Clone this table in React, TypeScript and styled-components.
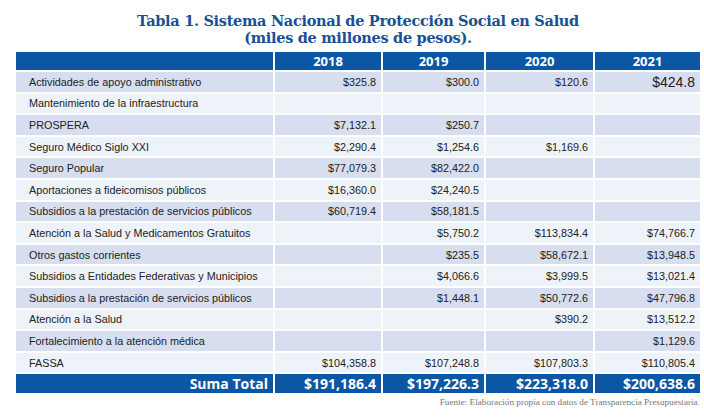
import styled, { createGlobalStyle } from "styled-components";

type Row = { label: string; values: string[]; big?: number };

const rows: Row[] = [
  { label: "Actividades de apoyo administrativo", values: ["$325.8", "$300.0", "$120.6", "$424.8"], big: 3 },
  { label: "Mantenimiento de la infraestructura", values: ["", "", "", ""] },
  { label: "PROSPERA", values: ["$7,132.1", "$250.7", "", ""] },
  { label: "Seguro Médico Siglo XXI", values: ["$2,290.4", "$1,254.6", "$1,169.6", ""] },
  { label: "Seguro Popular", values: ["$77,079.3", "$82,422.0", "", ""] },
  { label: "Aportaciones a fideicomisos públicos", values: ["$16,360.0", "$24,240.5", "", ""] },
  { label: "Subsidios a la prestación de servicios públicos", values: ["$60,719.4", "$58,181.5", "", ""] },
  { label: "Atención a la Salud y Medicamentos Gratuitos", values: ["", "$5,750.2", "$113,834.4", "$74,766.7"] },
  { label: "Otros gastos corrientes", values: ["", "$235.5", "$58,672.1", "$13,948.5"] },
  { label: "Subsidios a Entidades Federativas y Municipios", values: ["", "$4,066.6", "$3,999.5", "$13,021.4"] },
  { label: "Subsidios a la prestación de servicios públicos", values: ["", "$1,448.1", "$50,772.6", "$47,796.8"] },
  { label: "Atención a la Salud", values: ["", "", "$390.2", "$13,512.2"] },
  { label: "Fortalecimiento a la atención médica", values: ["", "", "", "$1,129.6"] },
  { label: "FASSA", values: ["$104,358.8", "$107,248.8", "$107,803.3", "$110,805.4"] },
];

const years = ["2018", "2019", "2020", "2021"];
const totals = ["$191,186.4", "$197,226.3", "$223,318.0", "$200,638.6"];
const colWidths = [258, 108, 103, 109, 106];

const GlobalStyle = createGlobalStyle`
  html, body {
    margin: 0;
    background: #ffffff;
  }
  body {
    font-family: "Liberation Sans", Arial, sans-serif;
  }
`;

export default function App() {
  return (
    <Page>
      <GlobalStyle />
      <Title>
        Tabla 1. Sistema Nacional de Protección Social en Salud
        <br />
        (miles de millones de pesos).
      </Title>
      <Table>
        <colgroup>
          {colWidths.map((w, i) => (
            <col key={i} style={{ width: w }} />
          ))}
        </colgroup>
        <thead>
          <tr>
            <HeadCell />
            {years.map((y) => (
              <HeadCell key={y}>{y}</HeadCell>
            ))}
          </tr>
        </thead>
        <tbody>
          {rows.map((r, i) => (
            <BodyRow key={i} odd={i % 2 === 0}>
              <LabelCell>{r.label}</LabelCell>
              {r.values.map((v, j) => (
                <NumCell key={j} big={r.big === j}>
                  {v}
                </NumCell>
              ))}
            </BodyRow>
          ))}
          <tr>
            <TotalCell>Suma Total</TotalCell>
            {totals.map((t) => (
              <TotalCell key={t}>{t}</TotalCell>
            ))}
          </tr>
        </tbody>
      </Table>
      <Source>Fuente: Elaboración propia con datos de Transparencia Presupuestaria.</Source>
    </Page>
  );
}

const Page = styled.div`
  width: 704px;
  height: 420px;
  padding: 12px 4px 0 16px;
  box-sizing: border-box;
  display: flex;
  flex-direction: column;
`;

const Title = styled.h1`
  margin: 0 0 6px;
  text-align: center;
  font-family: "DejaVu Serif", serif;
  font-weight: bold;
  font-size: 14.5px;
  line-height: 17px;
  letter-spacing: -0.3px;
  color: #1a4f94;
`;

const Table = styled.table`
  width: 684px;
  table-layout: fixed;
  border-collapse: collapse;
  border-spacing: 0;
`;

const HeadCell = styled.th`
  height: 18px;
  padding: 0;
  background: #0c57a5;
  color: #ffffff;
  font-family: "Open Sans", sans-serif;
  font-weight: 700;
  font-size: 13px;
  text-align: center;
  border-right: 2px solid #ffffff;
  border-bottom: 2px solid #ffffff;
  &:last-child {
    border-right: none;
  }
`;

const BodyRow = styled.tr<{ odd: boolean }>`
  background: ${(p) => (p.odd ? "#d6deef" : "#eef2f9")};
`;

const LabelCell = styled.td`
  height: 19.6px;
  padding: 0 0 0 13px;
  font-size: 10.8px;
  color: #222222;
  border-right: 2px solid #ffffff;
  border-bottom: 2px solid #ffffff;
  white-space: nowrap;
`;

const NumCell = styled.td<{ big: boolean }>`
  height: 19.6px;
  padding: 0 5px 0 0;
  text-align: right;
  font-size: ${(p) => (p.big ? "14px" : "10.8px")};
  color: #222222;
  border-right: 2px solid #ffffff;
  border-bottom: 2px solid #ffffff;
  &:last-child {
    border-right: none;
  }
`;

const TotalCell = styled.td`
  height: 19px;
  padding: 0 5px 0 0;
  background: #0c57a5;
  color: #ffffff;
  text-align: right;
  font-family: "Open Sans", sans-serif;
  font-weight: 700;
  font-size: 14px;
  border-right: 2px solid #ffffff;
  &:last-child {
    border-right: none;
  }
`;

const Source = styled.div`
  margin-top: 4px;
  text-align: right;
  font-family: "Liberation Serif", serif;
  font-size: 9.2px;
  color: #777777;
`;
